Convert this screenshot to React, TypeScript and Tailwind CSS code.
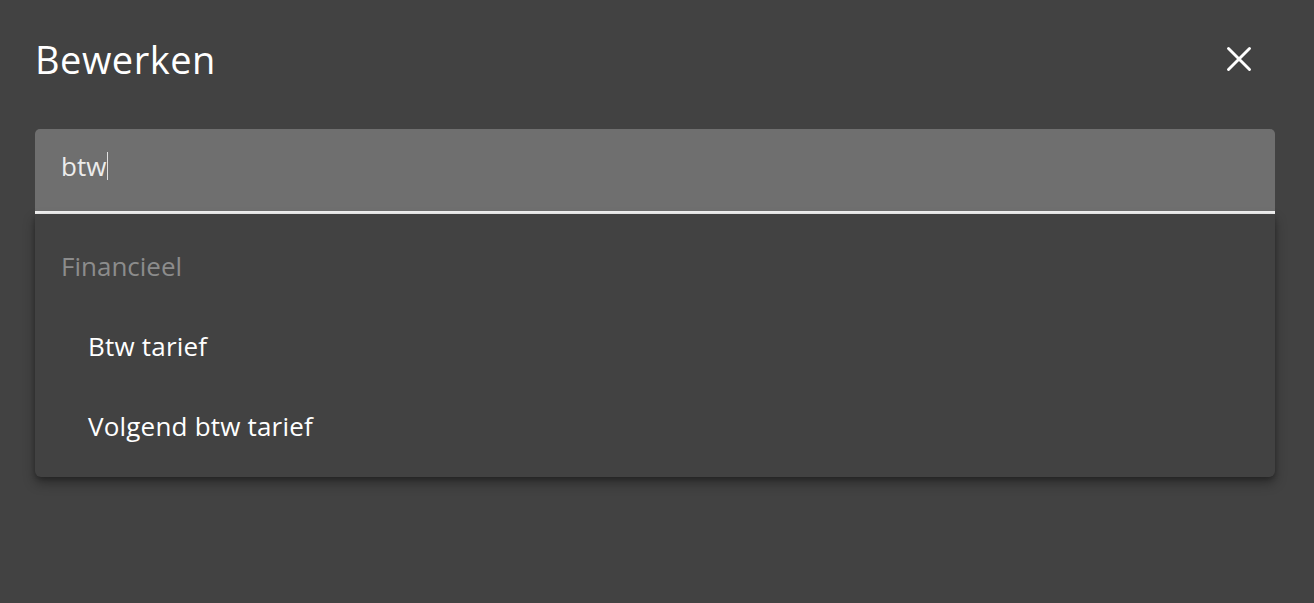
import React from "react";

export default function App() {
  return (
    <div
      className="w-full h-[603px] bg-[#424242] pl-[35px] pr-[39px] text-white overflow-hidden"
      style={{ fontFamily: "'Open Sans', 'Noto Sans', sans-serif" }}
    >
      <div className="flex items-center justify-between h-[62px] mt-[28px]">
        <div className="text-[38px] leading-none tracking-[0.5px] text-white">Bewerken</div>
        <button className="w-[40px] h-[40px] flex items-center justify-center mr-[16px] -mt-[1px]">
          <svg width="28" height="28" viewBox="0 0 24 24">
            <path d="M3 3 L21 21 M21 3 L3 21" stroke="white" strokeWidth="2.5" strokeLinecap="round" />
          </svg>
        </button>
      </div>
      <div className="mt-[39px]">
        <div className="h-[85px] bg-[#6f6f6f] rounded-t-[5px] border-b-[3px] border-[#f2f2f2] flex items-center px-[26px] pb-[9px]">
          <span className="text-[26px] text-[#ececec] leading-none">btw</span>
          <span className="w-px h-[28px] bg-[#e0e0e0] ml-[1px]" />
        </div>
        <div className="bg-[#424242] rounded-b-[6px] pt-[12px] pb-[11px] shadow-[0_6px_12px_rgba(0,0,0,0.35),0_2px_4px_rgba(0,0,0,0.2)]">
          <div className="h-[80px] flex items-center px-[26px] text-[26px] text-[#8c8c8c]">Financieel</div>
          <div className="h-[80px] flex items-center pl-[53px] text-[26px] tracking-[0.2px] text-white">Btw tarief</div>
          <div className="h-[80px] flex items-center pl-[53px] text-[26px] tracking-[0.2px] text-white">Volgend btw tarief</div>
        </div>
      </div>
    </div>
  );
}
